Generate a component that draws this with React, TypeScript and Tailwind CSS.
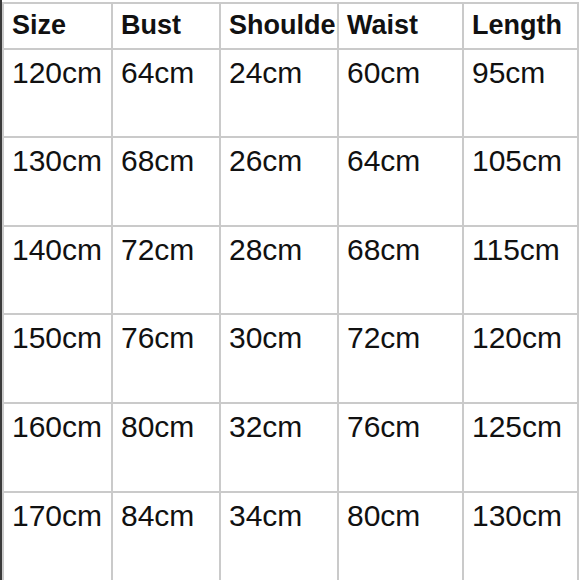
const COLUMNS = [
  { label: 'Size', width: 'w-[109px]' },
  { label: 'Bust', width: 'w-[108px]' },
  { label: 'Shoulder', width: 'w-[118px]' },
  { label: 'Waist', width: 'w-[125px]' },
  { label: 'Length', width: 'w-[115px]' },
];

const ROWS = [
  { h: 'h-[88px]', cells: ['120cm', '64cm', '24cm', '60cm', '95cm'] },
  { h: 'h-[89px]', cells: ['130cm', '68cm', '26cm', '64cm', '105cm'] },
  { h: 'h-[88px]', cells: ['140cm', '72cm', '28cm', '68cm', '115cm'] },
  { h: 'h-[89px]', cells: ['150cm', '76cm', '30cm', '72cm', '120cm'] },
  { h: 'h-[89px]', cells: ['160cm', '80cm', '32cm', '76cm', '125cm'] },
  { h: 'h-[89px]', cells: ['170cm', '84cm', '34cm', '80cm', '130cm'] },
];

export default function App() {
  return (
    <div
      className="flex w-[580px] h-[580px] overflow-hidden bg-white text-[#111]"
      style={{ fontFamily: '"Liberation Sans", Arial, sans-serif' }}
    >
      {/* dark edge on the left */}
      <div className="w-[2px] shrink-0 bg-[#3a3a3a]" />

      <div className="flex flex-col pt-[2px]">
        <div className="flex flex-col border-l-2 border-t-2 border-[#cacaca]">
          {/* Header */}
          <div className="flex h-[46px]">
            {COLUMNS.map((col) => (
              <div
                key={col.label}
                className={`${col.width} shrink-0 overflow-hidden whitespace-nowrap border-r-2 border-b-2 border-[#cacaca] pl-[8px] pt-[6px] text-[27px] font-bold leading-[1.15]`}
              >
                {col.label}
              </div>
            ))}
          </div>

          {/* Body */}
          {ROWS.map((row) => (
            <div key={row.cells[0]} className={`flex ${row.h}`}>
              {row.cells.map((cell, i) => (
                <div
                  key={i}
                  className={`${COLUMNS[i].width} shrink-0 overflow-hidden whitespace-nowrap border-r-2 border-b-2 border-[#cacaca] pl-[8px] pt-[6px] text-[30px] leading-[1.15]`}
                >
                  {cell}
                </div>
              ))}
            </div>
          ))}
        </div>
      </div>
    </div>
  );
}
